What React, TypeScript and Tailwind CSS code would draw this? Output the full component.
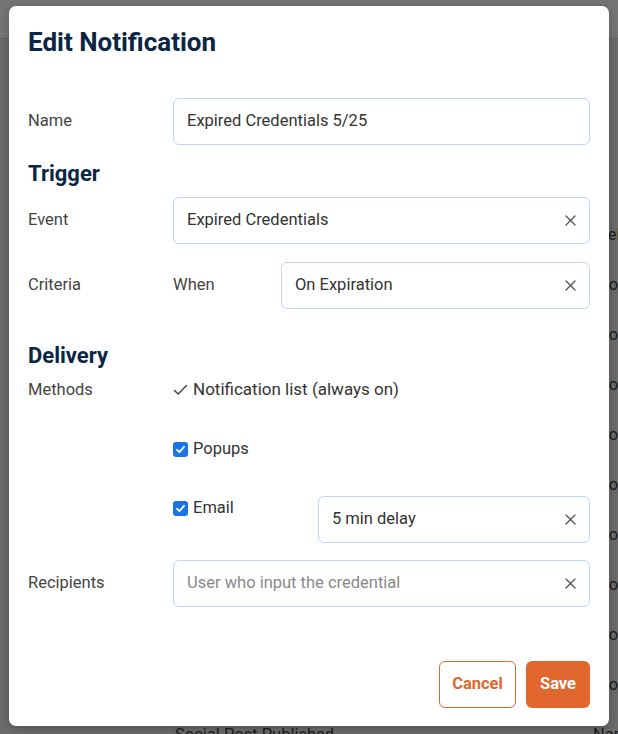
import React from 'react';

const XIcon = () => (
    <svg width="11" height="11" viewBox="0 0 11 11" className="shrink-0">
        <path d="M1 1L10 10M10 1L1 10" stroke="#555" strokeWidth="1.4" strokeLinecap="round" />
    </svg>
);

const CheckBox = () => (
    <span className="flex h-[15px] w-[15px] shrink-0 items-center justify-center rounded-[3px] bg-[#1a73e8]">
        <svg width="11" height="11" viewBox="0 0 11 11">
            <path d="M2 5.8L4.4 8.2L9 2.8" stroke="#fff" strokeWidth="1.8" fill="none" strokeLinecap="round" strokeLinejoin="round" />
        </svg>
    </span>
);

interface FieldProps {
    value: string;
    clearable?: boolean;
    placeholder?: boolean;
    className?: string;
}

const Field: React.FC<FieldProps> = ({ value, clearable, placeholder, className = '' }) => (
    <div
        className={`flex h-[47px] items-center justify-between rounded-[6px] border border-[#bfd4f6] pl-[13px] pr-[13px] text-[16.5px] ${
            placeholder ? 'text-[#8a8a8a]' : 'text-[#333]'
        } ${className}`}
    >
        <span>{value}</span>
        {clearable && <XIcon />}
    </div>
);

const rows = [
    { a: '', b: 'Delivered' },
    { a: '', b: 'Notification' },
    { a: '', b: 'Notification' },
    { a: '', b: 'Notification' },
    { a: '', b: 'Notification' },
    { a: '', b: 'Notification' },
    { a: '', b: 'Notification' },
    { a: '', b: 'Notification' },
    { a: '', b: 'Notification' },
    { a: '', b: 'Notification' },
    { a: 'Social Post Published', b: 'Name' },
];

const App: React.FC = () => {
    return (
        <div className="relative h-[734px] w-[618px] overflow-hidden bg-[#6b6b6b] font-[Roboto,sans-serif]">
            {/* page behind the backdrop */}
            <div className="h-[39px] border-b border-[#646464] bg-[#757575]" />
            <div className="pt-[171px] text-[16.5px] text-[#1c1c1c]">
                {rows.map((row, i) => (
                    <div key={i} className="flex h-[50px] items-center">
                        <div className="w-[597px] shrink-0 pl-[175px]">{row.a}</div>
                        <div className={i === rows.length - 1 ? '-ml-[4px] whitespace-nowrap' : 'whitespace-nowrap'}>{row.b}</div>
                    </div>
                ))}
            </div>

            {/* modal */}
            <div className="absolute left-[9px] top-[6px] w-[600px] rounded-[7px] bg-white px-[19px] pb-[18px] pt-[22px] shadow-[0_2px_10px_rgba(0,0,0,0.25)]">
                <h2 className="h-[28px] text-[26px] font-bold leading-[28px] text-[#0b2545]">Edit Notification</h2>

                <div className="mt-[42px] flex items-center">
                    <div className="w-[145px] shrink-0 text-[16.5px] text-[#444]">Name</div>
                    <Field value="Expired Credentials 5/25" className="flex-1" />
                </div>

                <h3 className="mt-[15px] h-[28px] text-[22px] font-bold leading-[28px] text-[#0b2545]">Trigger</h3>

                <div className="mt-[9px] flex items-center">
                    <div className="w-[145px] shrink-0 text-[16.5px] text-[#444]">Event</div>
                    <Field value="Expired Credentials" clearable className="flex-1" />
                </div>

                <div className="mt-[18px] flex items-center">
                    <div className="w-[145px] shrink-0 text-[16.5px] text-[#444]">Criteria</div>
                    <div className="w-[108px] shrink-0 text-[16.5px] text-[#444]">When</div>
                    <Field value="On Expiration" clearable className="flex-1" />
                </div>

                <h3 className="mt-[33px] h-[28px] text-[22px] font-bold leading-[28px] text-[#0b2545]">Delivery</h3>

                <div className="mt-[8px] flex h-[24px] items-center">
                    <div className="w-[145px] shrink-0 text-[16.5px] text-[#444]">Methods</div>
                    <div className="flex items-center gap-[5px] text-[17px] text-[#333]">
                        <svg width="15" height="12" viewBox="0 0 15 12">
                            <path d="M1.5 6.5L5.2 10L13.5 1.5" stroke="#444" strokeWidth="1.5" fill="none" strokeLinecap="round" strokeLinejoin="round" />
                        </svg>
                        <span>Notification list (always on)</span>
                    </div>
                </div>

                <div className="mt-[35px] flex h-[24px] items-center">
                    <div className="w-[145px] shrink-0" />
                    <div className="flex items-center gap-[5px] text-[16.5px] text-[#333]">
                        <CheckBox />
                        <span>Popups</span>
                    </div>
                </div>

                <div className="mt-[35px] flex">
                    <div className="w-[145px] shrink-0" />
                    <div className="flex h-[24px] w-[145px] shrink-0 items-center gap-[5px] text-[16.5px] text-[#333]">
                        <CheckBox />
                        <span>Email</span>
                    </div>
                    <Field value="5 min delay" clearable className="flex-1" />
                </div>

                <div className="mt-[17px] flex items-center">
                    <div className="w-[145px] shrink-0 text-[16.5px] text-[#444]">Recipients</div>
                    <Field value="User who input the credential" clearable placeholder className="flex-1" />
                </div>

                <div className="mt-[54px] flex justify-end gap-[10px]">
                    <button className="h-[47px] w-[77px] rounded-[6px] border border-[#e2672f] bg-white text-[16.5px] font-bold text-[#e2672f]">
                        Cancel
                    </button>
                    <button className="h-[47px] w-[64px] rounded-[6px] bg-[#e2672f] text-[16.5px] font-bold text-white">
                        Save
                    </button>
                </div>
            </div>
        </div>
    );
};

export default App;
